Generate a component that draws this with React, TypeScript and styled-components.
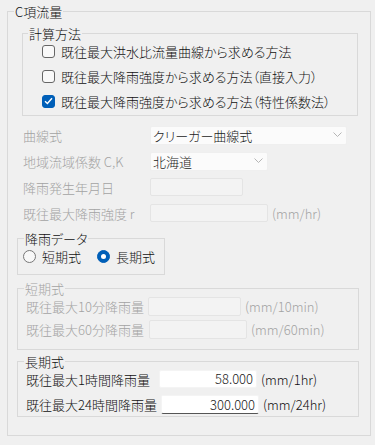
import React from 'react'
import styled, { createGlobalStyle } from 'styled-components'

const GlobalStyle = createGlobalStyle`
  html, body {
    margin: 0;
    padding: 0;
    background: #f0f0f0;
  }
  body {
    font-family: "Noto Sans CJK JP", "Noto Sans", sans-serif;
    font-size: 13px;
    font-weight: 300;
    color: #111;
    font-feature-settings: "palt";
  }
`

const Root = styled.div`
  width: 375px;
  height: 445px;
  box-sizing: border-box;
  padding: 4px 4px 0 7px;
`

const Group = styled.fieldset<{ $w?: number }>`
  margin: 0;
  padding: 0;
  min-width: 0;
  border: 1px solid #d9d9d9;
  ${p => (p.$w ? `width: ${p.$w}px; box-sizing: border-box;` : '')}
`

const Legend = styled.legend<{ $off: number; $disabled?: boolean }>`
  margin-left: ${p => p.$off}px;
  padding: 0 1px;
  line-height: 15px;
  height: 15px;
  color: ${p => (p.$disabled ? '#a3a3a3' : '#111')};
`

const OuterBody = styled.div`
  padding: 7px 11px 18px 9px;
`

const MethodGroup = styled(Group)`
  margin: 0 1px 0 5px;
`

const MethodList = styled.div`
  display: flex;
  flex-direction: column;
  gap: 5px;
  padding: 0 0 4px 19px;
`

const CheckRow = styled.div`
  display: flex;
  align-items: center;
  gap: 6px;
  height: 20px;
  white-space: nowrap;
`

const CheckBox = styled.span<{ $checked?: boolean }>`
  width: 13px;
  height: 13px;
  box-sizing: border-box;
  border-radius: 3px;
  border: 1px solid ${p => (p.$checked ? '#005fb8' : '#666')};
  background: ${p => (p.$checked ? '#005fb8' : '#f9f9f9')};
  display: flex;
  align-items: center;
  justify-content: center;
`

const Form = styled.div`
  display: flex;
  flex-direction: column;
  gap: 6px;
  margin: 9px 0 0 6px;
`

const FieldRow = styled.div`
  display: flex;
  align-items: center;
  height: 20px;
  white-space: nowrap;
`

const FieldLabel = styled.span<{ $w: number; $disabled?: boolean }>`
  width: ${p => p.$w}px;
  flex-shrink: 0;
  color: ${p => (p.$disabled ? '#a3a3a3' : '#111')};
`

const Select = styled.div<{ $w: number }>`
  width: ${p => p.$w}px;
  height: 19px;
  box-sizing: border-box;
  background: #fbfbfb;
  border: 1px solid #efefef;
  border-radius: 2px;
  display: flex;
  align-items: center;
  justify-content: space-between;
  padding: 0 4px 0 2px;
  color: #1a1a1a;
`

const TextBox = styled.div<{ $w: number; $h?: number; $disabled?: boolean; $focused?: boolean }>`
  width: ${p => p.$w}px;
  height: ${p => p.$h ?? 19}px;
  box-sizing: border-box;
  border-radius: 2px;
  background: ${p => (p.$disabled ? '#f3f3f3' : '#fff')};
  border: 1px solid ${p => (p.$disabled ? '#e4e4e4' : '#f4f4f4')};
  ${p => (p.$focused ? 'border-bottom: 1px solid #555;' : '')}
  text-align: right;
  padding-right: 3px;
  line-height: ${p => (p.$h ?? 19) - 2}px;
  color: #1a1a1a;
`

const Unit = styled.span<{ $disabled?: boolean }>`
  margin-left: 4px;
  color: ${p => (p.$disabled ? '#a3a3a3' : '#111')};
`

const RainGroup = styled(Group)`
  margin-top: 8px;
`

const RadioRow = styled.div`
  display: flex;
  align-items: center;
  height: 20px;
  padding: 0 0 8px 5px;
`

const RadioItem = styled.span<{ $w?: number }>`
  display: flex;
  align-items: center;
  gap: 6px;
  ${p => (p.$w ? `width: ${p.$w}px;` : '')}
`

const Radio = styled.span<{ $checked?: boolean }>`
  width: 13px;
  height: 13px;
  box-sizing: border-box;
  border-radius: 50%;
  border: 1px solid ${p => (p.$checked ? '#005fb8' : '#777')};
  background: ${p => (p.$checked ? '#005fb8' : '#f8f8f8')};
  display: flex;
  align-items: center;
  justify-content: center;
  &::after {
    content: '';
    display: ${p => (p.$checked ? 'block' : 'none')};
    width: 5px;
    height: 5px;
    border-radius: 50%;
    background: #fff;
  }
`

const SubGroup = styled(Group)<{ $mt: number }>`
  margin-top: ${p => p.$mt}px;
`

const SubRows = styled.div<{ $gap: number; $pb: number }>`
  display: flex;
  flex-direction: column;
  gap: ${p => p.$gap}px;
  padding: 0 0 ${p => p.$pb}px 8px;
`

const Chevron = () => (
  <svg width="9" height="6" viewBox="0 0 9 6">
    <polyline points="0.5,0.5 4.5,4.5 8.5,0.5" fill="none" stroke="#b5b5b5" strokeWidth="1" />
  </svg>
)

const Check = () => (
  <svg width="9" height="8" viewBox="0 0 9 8">
    <polyline points="1,4.2 3.4,6.5 8,1.2" fill="none" stroke="#fff" strokeWidth="1.4" />
  </svg>
)

const methods = [
  { text: '既往最大洪水比流量曲線から求める方法', checked: false },
  { text: '既往最大降雨強度から求める方法（直接入力）', checked: false },
  { text: '既往最大降雨強度から求める方法（特性係数法）', checked: true },
]

const App = () => {
  return (
    <Root>
      <GlobalStyle />
      <Group>
        <Legend $off={6}>C項流量</Legend>
        <OuterBody>
          <MethodGroup>
            <Legend $off={5}>計算方法</Legend>
            <MethodList>
              {methods.map(m => (
                <CheckRow key={m.text}>
                  <CheckBox $checked={m.checked}>{m.checked && <Check />}</CheckBox>
                  {m.text}
                </CheckRow>
              ))}
            </MethodList>
          </MethodGroup>

          <Form>
            <FieldRow>
              <FieldLabel $w={127} $disabled>曲線式</FieldLabel>
              <Select $w={197}>
                クリーガー曲線式
                <Chevron />
              </Select>
            </FieldRow>
            <FieldRow>
              <FieldLabel $w={127} $disabled>地域流域係数 C,K</FieldLabel>
              <Select $w={118}>
                北海道
                <Chevron />
              </Select>
            </FieldRow>
            <FieldRow>
              <FieldLabel $w={127} $disabled>降雨発生年月日</FieldLabel>
              <TextBox $w={93} $h={18} $disabled />
            </FieldRow>
            <FieldRow>
              <FieldLabel $w={127} $disabled>既往最大降雨強度 r</FieldLabel>
              <TextBox $w={118} $h={18} $disabled />
              <Unit $disabled>(mm/hr)</Unit>
            </FieldRow>
          </Form>

          <RainGroup $w={148}>
            <Legend $off={6}>降雨データ</Legend>
            <RadioRow>
              <RadioItem $w={74}>
                <Radio />
                短期式
              </RadioItem>
              <RadioItem>
                <Radio $checked />
                長期式
              </RadioItem>
            </RadioRow>
          </RainGroup>

          <SubGroup $mt={6}>
            <Legend $off={6} $disabled>短期式</Legend>
            <SubRows $gap={3} $pb={10}>
              <FieldRow>
                <FieldLabel $w={122} $disabled>既往最大10分降雨量</FieldLabel>
                <TextBox $w={93} $disabled />
                <Unit $disabled>(mm/10min)</Unit>
              </FieldRow>
              <FieldRow>
                <FieldLabel $w={123} $disabled>既往最大60分降雨量</FieldLabel>
                <TextBox $w={98} $disabled />
                <Unit $disabled>(mm/60min)</Unit>
              </FieldRow>
            </SubRows>
          </SubGroup>

          <SubGroup $mt={4}>
            <Legend $off={6}>長期式</Legend>
            <SubRows $gap={5} $pb={2}>
              <FieldRow>
                <FieldLabel $w={133}>既往最大1時間降雨量</FieldLabel>
                <TextBox $w={98} $h={18}>58.000</TextBox>
                <Unit>(mm/1hr)</Unit>
              </FieldRow>
              <FieldRow>
                <FieldLabel $w={135}>既往最大24時間降雨量</FieldLabel>
                <TextBox $w={98} $focused>300.000</TextBox>
                <Unit>(mm/24hr)</Unit>
              </FieldRow>
            </SubRows>
          </SubGroup>
        </OuterBody>
      </Group>
    </Root>
  )
}

export default App
